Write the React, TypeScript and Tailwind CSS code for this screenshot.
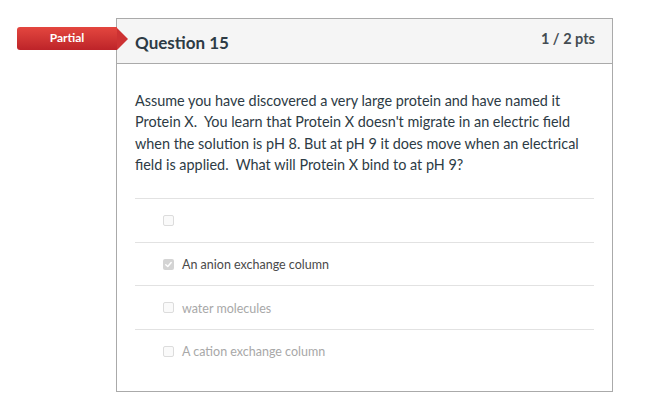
import React from 'react';

const ANSWERS = [
  { label: '', checked: false, selected: false },
  { label: 'An anion exchange column', checked: true, selected: true },
  { label: 'water molecules', checked: false, selected: false },
  { label: 'A cation exchange column', checked: false, selected: false },
];

function Checkbox({ checked }: { checked: boolean }) {
  if (checked) {
    return (
      <span className="w-[11px] h-[11px] rounded-[2px] bg-[#d4d4d4] flex items-center justify-center shrink-0">
        <svg width="9" height="9" viewBox="0 0 10 10">
          <path d="M2 5.2 L4.2 7.2 L8 2.8" fill="none" stroke="#fff" strokeWidth="1.6" strokeLinecap="round" strokeLinejoin="round" />
        </svg>
      </span>
    );
  }
  return <span className="w-[11px] h-[11px] rounded-[2px] border border-[#dcdcdc] bg-[#fafafa] shrink-0" />;
}

export default function App() {
  return (
    <div className="w-[647px] h-[413px] bg-white font-['Lato','Noto_Sans',sans-serif] pt-[18px]">
      <div className="relative ml-[116px] w-[497px] h-[374px] border border-[#aaaaaa] flex flex-col">
        {/* Partial badge */}
        <div className="absolute left-[-100px] top-[8px] flex items-center">
          <div className="w-[100px] h-[23px] rounded-l-[3px] bg-gradient-to-b from-[#e4463f] to-[#bd2329] flex items-center justify-center text-white text-[12px] font-bold pb-[1px]">
            Partial
          </div>
          <div className="w-0 h-0 border-y-[11.5px] border-y-transparent border-l-[11px] border-l-[#cd3233]" />
        </div>

        <div className="h-[45px] bg-[#f5f5f5] border-b border-[#aaaaaa] flex items-center justify-between pl-[18px] pr-[17px] shrink-0">
          <h2 className="text-[17px] font-bold text-[#2d3b45] pt-[4px]">Question 15</h2>
          <span className="text-[14.5px] font-bold text-[#444c52] pb-[4px]">1 / 2 pts</span>
        </div>

        <div className="px-[18px] pt-[26px]">
          <p className="text-[14.4px] leading-[21.3px] text-[#2d3b45] w-[456px]">
            Assume you have discovered a very large protein and have named it Protein X.&nbsp; You learn that Protein X doesn't migrate in an electric field when the solution is pH 8. But at pH 9 it does move when an electrical field is applied.&nbsp; What will Protein X bind to at pH 9?
          </p>

          <div className="mt-[23px] w-[459px]">
            {ANSWERS.map((a, i) => (
              <div key={i} className="border-t border-[#e2e2e2] h-[43.5px] flex items-center gap-[8px] pl-[28px] pt-[1px]">
                <Checkbox checked={a.checked} />
                <span className={`text-[12.5px] pt-[2px] ${a.selected ? 'text-[#4a4a4a]' : 'text-[#a8a8a8]'}`}>{a.label}</span>
              </div>
            ))}
          </div>
        </div>
      </div>
    </div>
  );
}
